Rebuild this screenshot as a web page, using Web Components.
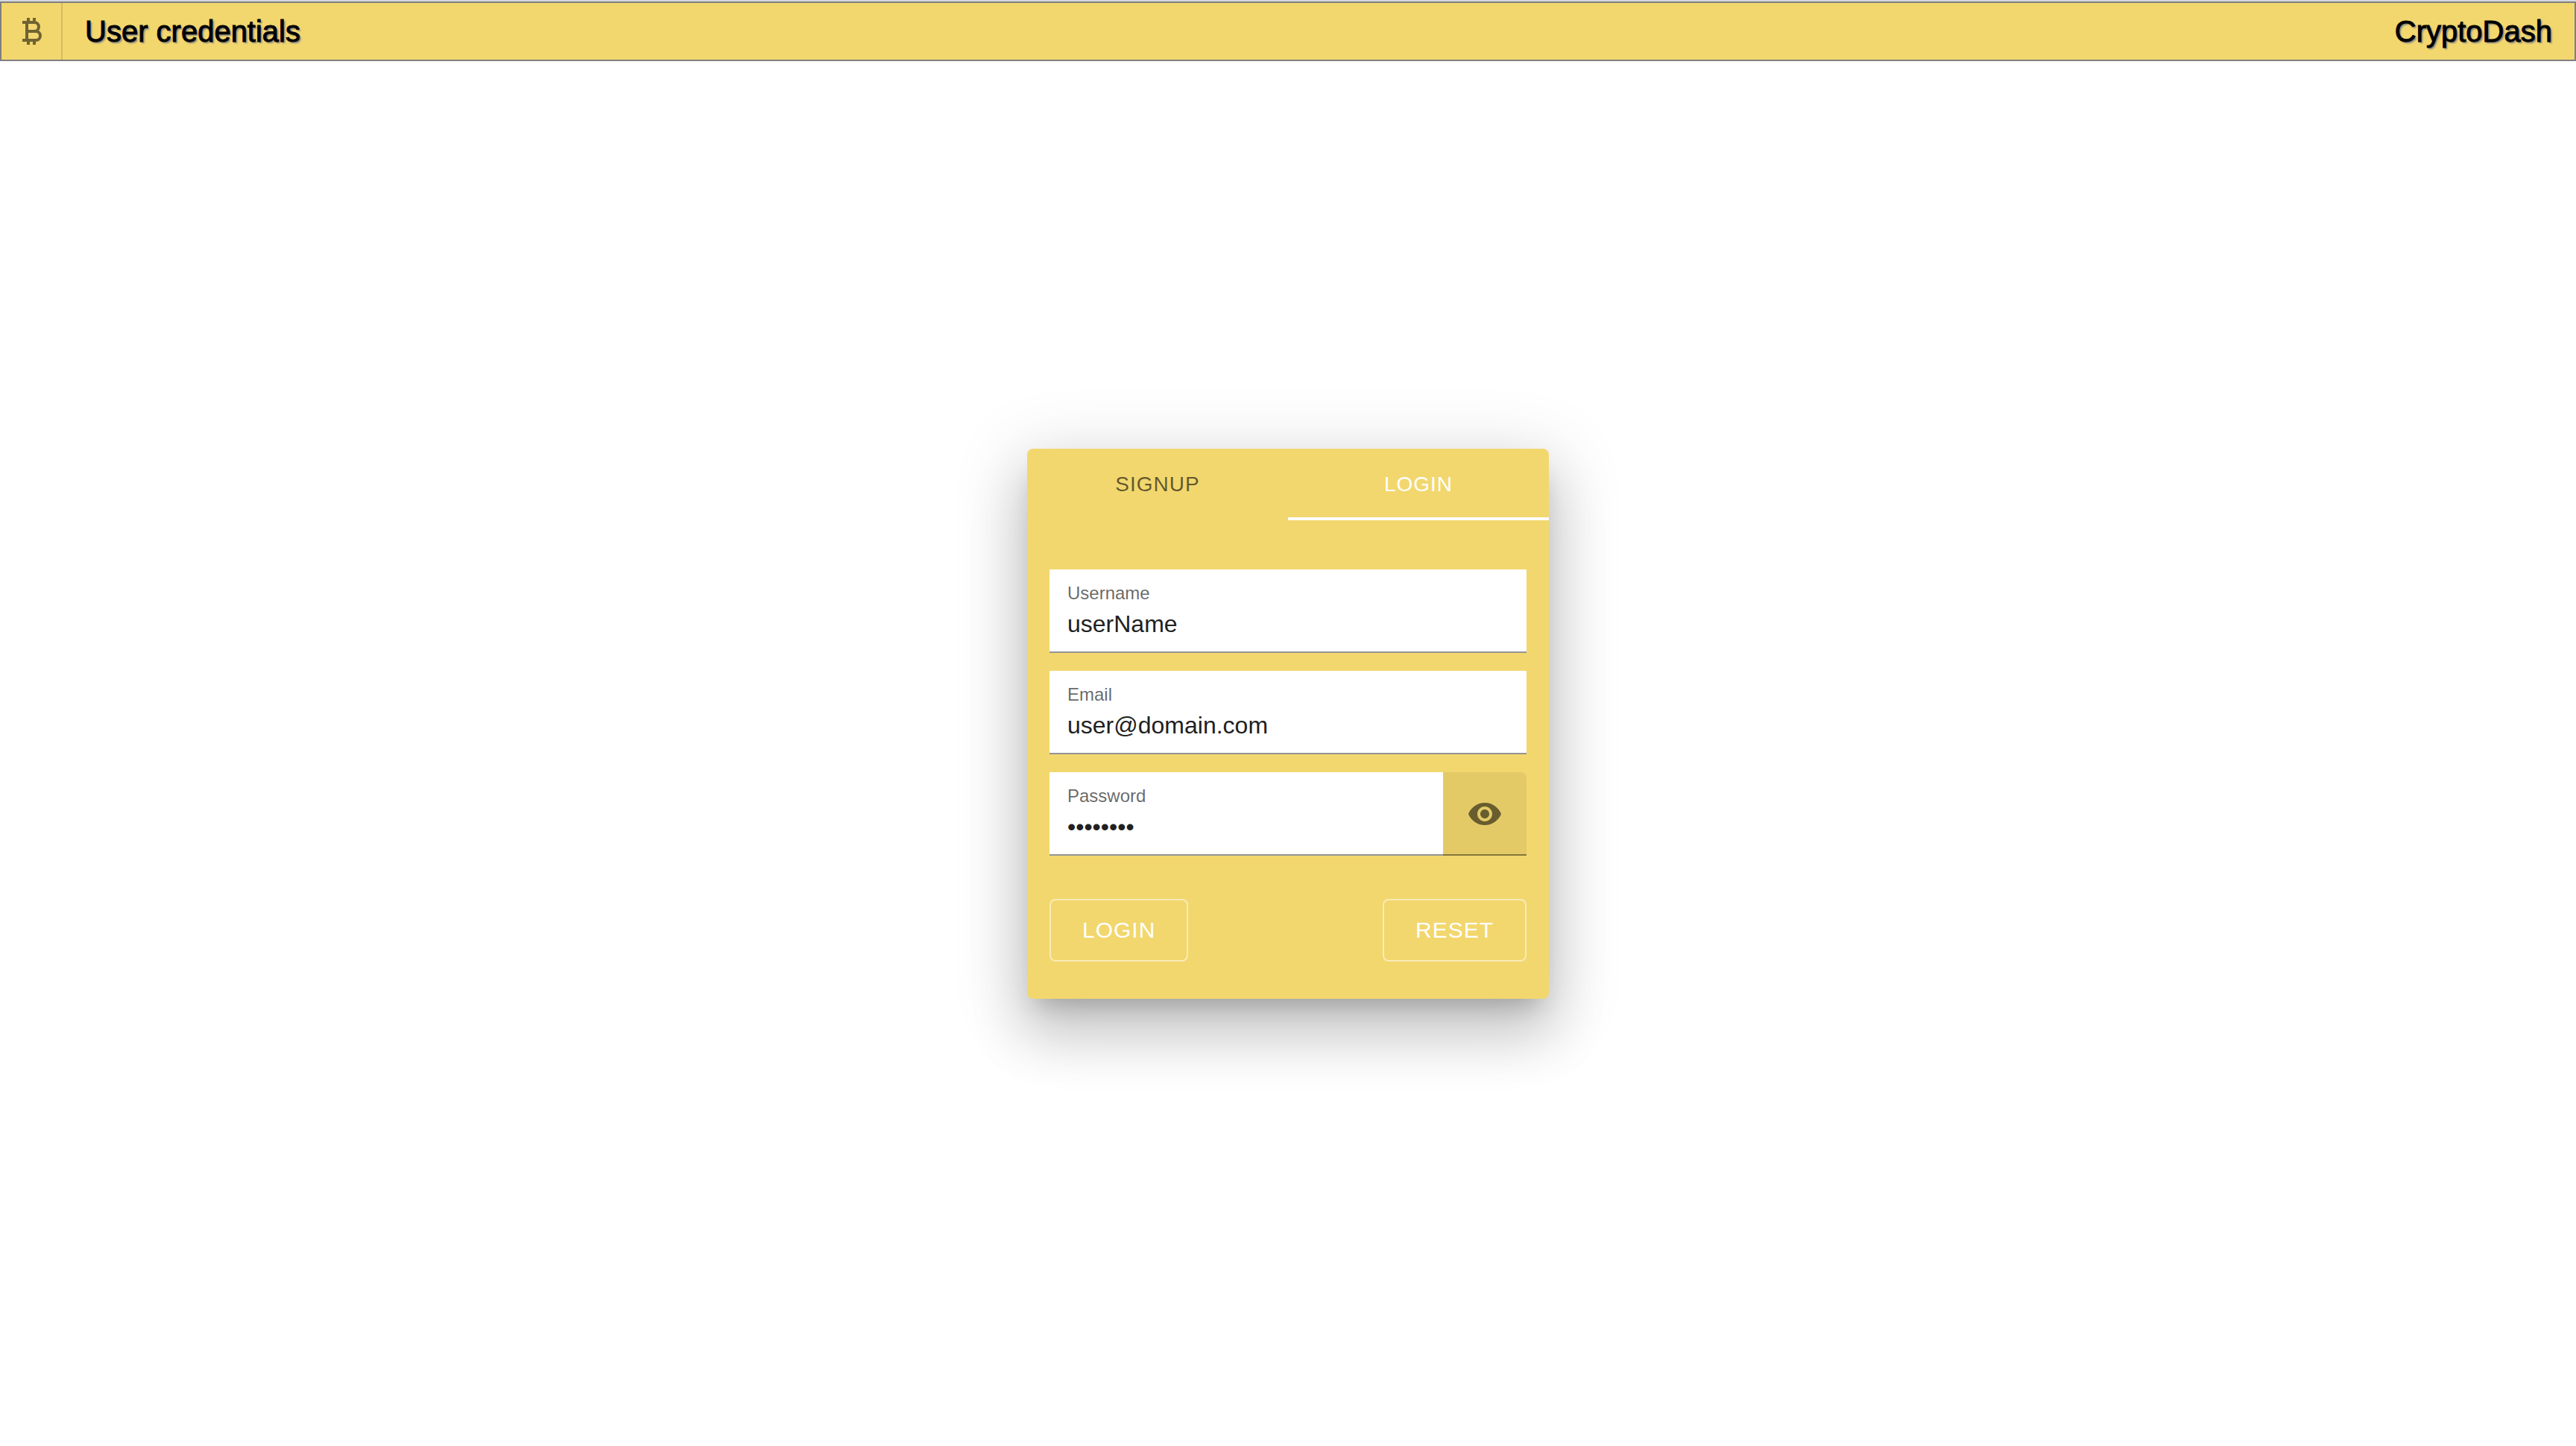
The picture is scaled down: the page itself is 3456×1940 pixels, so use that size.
<!DOCTYPE html>
<html lang="en">
<head>
<meta charset="utf-8">
<title>CryptoDash</title>
<style>
  html, body { margin: 0; min-height: 100%; background: #fff; }
  body { font-family: "Liberation Sans", Arial, sans-serif; color: #212121; }
</style>
</head>
<body>
<crypto-app></crypto-app>

<script>
const define = (name, html, base = HTMLElement) => {
  const template = document.createElement('template');
  template.innerHTML = html;
  customElements.define(name, class extends base {
    constructor() {
      super();
      this.attachShadow({ mode: 'open' }).append(template.content.cloneNode(true));
    }
  });
};

/* A filled text field: label above its value, optional action at the end. */
class FieldBase extends HTMLElement {
  connectedCallback() {
    const input = this.shadowRoot.querySelector('input');
    this.shadowRoot.querySelector('label').textContent = this.getAttribute('label');
    input.type = this.getAttribute('type') || 'text';
    input.value = this.getAttribute('value') || '';
  }
}

define('app-bar', `
  <style>
    :host { display: block; border-top: 2px solid #d5d8df; }
    header { display: flex; align-items: stretch; height: 76px; background: #f2d76e; border: 2px solid #808080; color: #000; }
    button { width: 82px; padding: 0; border: 0; border-right: 2px solid rgba(0,0,0,.12); background: none; color: rgba(0,0,0,.54);
      display: flex; align-items: center; justify-content: center; box-sizing: border-box; }
    svg { width: 48px; height: 48px; display: block; }
    .titles { flex: 1; display: flex; align-items: center; justify-content: space-between; padding: 0 30px; }
    ::slotted(*) { margin: 0; font-size: 40px; line-height: 64px; font-weight: 400; text-shadow: 2px 2px 2px #808080; -webkit-text-stroke: 1px #000; }
  </style>
  <header>
    <button type="button" aria-label="Home">
      <svg viewBox="0 0 48 48" fill="none" stroke="currentColor" stroke-width="4" aria-hidden="true">
        <path d="M12 12H28a6 6 0 0 1 0 12H18M28 24h2a6 6 0 0 1 0 12H12M18 14V34M20 6V10M28 6V10M20 38V42M28 38V42"/>
      </svg>
    </button>
    <div class="titles"><slot name="title"></slot><slot name="brand"></slot></div>
  </header>`);

define('tab-strip', `
  <style>
    :host { display: block; }
    div { display: flex; }
    button { flex: 1; height: 96px; padding: 0; border: 0; border-bottom: 4px solid transparent; border-top: 4px solid transparent;
      background: none; font: 28px "Liberation Sans", Arial, sans-serif; letter-spacing: 1px; color: rgba(0,0,0,.6); text-transform: uppercase; }
    button[aria-selected="true"] { color: #fff; border-bottom-color: #fff; }
  </style>
  <div role="tablist">
    <button type="button" role="tab" aria-selected="false">SIGNUP</button>
    <button type="button" role="tab" aria-selected="true">LOGIN</button>
  </div>`);

define('text-field', `
  <style>
    :host { display: block; }
    .row { display: flex; height: 110px; border-bottom: 2px solid rgba(0,0,0,.42); background: #fff; }
    .box { flex: 1; display: flex; flex-direction: column; padding: 18px 24px 0; background: #fff; }
    label { font-size: 24px; line-height: 28px; color: rgba(0,0,0,.6); }
    input { width: 100%; height: 38px; margin: 8px 0 0; padding: 0; border: 0; outline: 0; background: none;
      font: 32px "Liberation Sans", Arial, sans-serif; color: #212121; }
  </style>
  <div class="row">
    <div class="box"><label for="control">Label</label><input id="control"></div>
    <slot name="action"></slot>
  </div>`, FieldBase);

define('reveal-button', `
  <style>
    :host { display: block; width: 112px; background: #f2d76e; margin-bottom: -2px; }
    button { width: 100%; height: 112px; padding: 2px 0 0; border: 0; border-bottom: 2px solid rgba(0,0,0,.42); border-top-right-radius: 8px;
      background: rgba(0,0,0,.06); color: rgba(0,0,0,.54); display: flex; align-items: center; justify-content: center; box-sizing: border-box; }
    svg { width: 48px; height: 48px; display: block; }
  </style>
  <button type="button" aria-label="Show password">
    <svg viewBox="0 0 24 24" fill="currentColor" aria-hidden="true">
      <path d="M12 4.5C7 4.5 2.73 7.61 1 12c1.73 4.39 6 7.5 11 7.5s9.27-3.11 11-7.5c-1.73-4.39-6-7.5-11-7.5zM12 17c-2.76 0-5-2.24-5-5s2.24-5 5-5 5 2.24 5 5-2.24 5-5 5zm0-8c-1.66 0-3 1.34-3 3s1.34 3 3 3 3-1.34 3-3-1.34-3-3-3z"/>
    </svg>
  </button>`);

define('outline-button', `
  <style>
    :host { display: block; }
    button { height: 84px; padding: 0 42px; border: 2px solid rgba(255,255,255,.5); border-radius: 8px; background: none;
      font: 30px "Liberation Sans", Arial, sans-serif; letter-spacing: 1px; color: #fff; }
  </style>
  <button type="button"><slot></slot></button>`);

define('login-card', `
  <style>
    :host { display: block; width: 700px; background: #f2d76e; border-radius: 8px;
      box-shadow: 0 22px 30px -14px rgba(0,0,0,.2), 0 48px 76px 6px rgba(0,0,0,.14), 0 18px 92px 16px rgba(0,0,0,.12); }
    form { display: flex; flex-direction: column; gap: 24px; padding: 66px 30px 50px; }
    .actions { display: flex; justify-content: space-between; padding-top: 34px; }
  </style>
  <tab-strip></tab-strip>
  <form>
    <text-field label="Username" value="userName"></text-field>
    <text-field label="Email" value="user@domain.com"></text-field>
    <text-field label="Password" type="password" value="password"><reveal-button slot="action"></reveal-button></text-field>
    <div class="actions"><outline-button>LOGIN</outline-button><outline-button>RESET</outline-button></div>
  </form>`);

define('crypto-app', `
  <style>
    :host { display: flex; flex-direction: column; min-height: 100vh; }
    main { flex: 1; display: flex; align-items: center; justify-content: center; padding-bottom: 80px; }
  </style>
  <app-bar><h1 slot="title">User credentials</h1><span slot="brand">CryptoDash</span></app-bar>
  <main><login-card></login-card></main>`);
</script>
</body>
</html>
